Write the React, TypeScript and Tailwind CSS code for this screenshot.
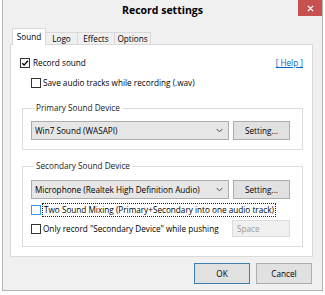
import React from 'react';

const CheckBox: React.FC<{ checked?: boolean; hover?: boolean }> = ({ checked, hover }) => (
  <span
    className={`flex h-[10px] w-[10px] shrink-0 items-center justify-center border bg-white ${
      hover ? 'border-[#3399ff]' : 'border-[#333333]'
    }`}
  >
    {checked && (
      <svg viewBox="0 0 10 10" className="h-[8px] w-[8px]">
        <path d="M1.5 5.2 L3.9 7.6 L8.6 2.2" stroke="#000" strokeWidth="1.7" fill="none" />
      </svg>
    )}
  </span>
);

const WinButton: React.FC<{ label: string; isDefault?: boolean; className?: string }> = ({ label, isDefault, className }) => (
  <button
    className={`flex items-center justify-center border bg-[#e1e1e1] text-black ${
      isDefault ? 'border-[#3c7fb1]' : 'border-[#adadad]'
    } ${className ?? ''}`}
  >
    {label}
  </button>
);

const DeviceSelect: React.FC<{ value: string }> = ({ value }) => (
  <div className="flex h-[19px] w-[198px] items-center border border-[#acacac] bg-[#e6e6e6] pl-[3px] pr-[5px]">
    <span className="flex-1 truncate">{value}</span>
    <svg viewBox="0 0 8 5" className="h-[5px] w-[7px]">
      <path d="M0.8 0.8 L4 4 L7.2 0.8" stroke="#444" strokeWidth="1.1" fill="none" />
    </svg>
  </div>
);

const tabs = [
  { name: 'Sound', w: 'w-[34px]' },
  { name: 'Logo', w: 'w-[33px]' },
  { name: 'Effects', w: 'w-[38px]' },
  { name: 'Options', w: 'w-[37px]' },
];

export default function App() {
  return (
    <div className="h-[295px] w-[325px] bg-white font-['Open_Sans','Noto_Sans',sans-serif] text-[8.2px] leading-[12px] text-black">
      <div className="ml-[2px] h-[291px] w-[321px] border-x border-b border-[#b4b4b4] bg-[#f0f0f0]">
        {/* title bar */}
        <div className="flex h-[19px] items-start">
          <div className="w-[24px]" />
          <div className="flex-1 pt-[3px] text-center text-[10.5px] font-bold leading-[14px] text-black">Record settings</div>
          <div className="flex h-[16px] w-[24px] items-center justify-center bg-[#c75050]">
            <svg viewBox="0 0 8 8" className="h-[7px] w-[7px]">
              <path d="M1 1 L7 7 M7 1 L1 7" stroke="#fff" strokeWidth="1.6" />
            </svg>
          </div>
        </div>

        <div className="pl-[7px] pr-[9px] pt-[9px]">
          {/* tabs */}
          <div className="relative z-10 -mb-px flex items-end pl-[2px]">
            {tabs.map((t, i) =>
              i === 0 ? (
                <div
                  key={t.name}
                  className={`${t.w} flex h-[17px] items-center justify-center border border-b-0 border-[#d9d9d9] bg-white pb-[1px]`}
                >
                  {t.name}
                </div>
              ) : (
                <div
                  key={t.name}
                  className={`${t.w} -ml-px flex h-[13px] items-center justify-center border border-[#d9d9d9] bg-[#f0f0f0]`}
                >
                  {t.name}
                </div>
              )
            )}
          </div>

          {/* panel */}
          <div className="h-[213px] border border-[#d9d9d9] bg-white">
            <div className="mt-[12px] flex h-[12px] items-center pl-[9px] pr-[9px]">
              <CheckBox checked />
              <span className="ml-[3px] flex-1">Record sound</span>
              <span className="text-[#0066cc] underline">[ Help ]</span>
            </div>
            <div className="mt-[8px] flex h-[12px] items-center pl-[20px]">
              <CheckBox />
              <span className="ml-[2px]">Save audio tracks while recording (.wav)</span>
            </div>

            <fieldset className="ml-[11px] mr-[9px] mt-[13px] border border-[#dcdcdc] pb-[9px] pl-[8px] pr-[12px] pt-[7px]">
              <legend className="ml-[3px] px-[2px] leading-[12px] text-[#222]">Primary Sound Device</legend>
              <div className="flex items-center gap-[4px]">
                <DeviceSelect value="Win7 Sound (WASAPI)" />
                <WinButton label="Setting..." className="h-[19px] w-[57px]" />
              </div>
            </fieldset>

            <fieldset className="ml-[11px] mr-[9px] mt-[10px] border border-[#dcdcdc] pb-[9px] pl-[8px] pr-[12px] pt-[8px]">
              <legend className="ml-[3px] px-[2px] leading-[12px] text-[#222]">Secondary Sound Device</legend>
              <div className="flex items-center gap-[4px]">
                <DeviceSelect value="Microphone (Realtek High Definition Audio)" />
                <WinButton label="Setting..." className="h-[19px] w-[57px]" />
              </div>
              <div className="mt-[4px] flex h-[14px] items-center">
                <CheckBox hover />
                <span className="ml-[1px] border border-dotted border-[#222] px-[1px] leading-[12px]">
                  Two Sound Mixing (Primary+Secondary into one audio track)
                </span>
              </div>
              <div className="mt-[3px] flex h-[17px] items-center justify-between">
                <div className="flex items-center">
                  <CheckBox />
                  <span className="ml-[2px]">Only record "Secondary Device" while pushing</span>
                </div>
                <div className="flex h-[17px] w-[58px] items-center border border-[#dcdcdc] bg-[#f0f0f0] pl-[4px] text-[#9a9a9a]">
                  Space
                </div>
              </div>
            </fieldset>
          </div>

          {/* buttons */}
          <div className="mr-[1px] mt-[6px] flex justify-end gap-[6px]">
            <WinButton label="OK" isDefault className="h-[21px] w-[56px]" />
            <WinButton label="Cancel" className="h-[21px] w-[56px]" />
          </div>
        </div>
      </div>
    </div>
  );
}
